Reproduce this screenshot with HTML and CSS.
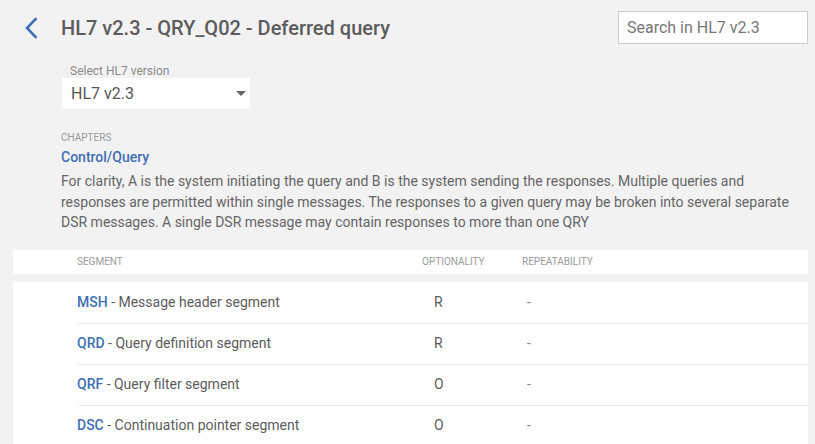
FILE: index.html
```html
<!DOCTYPE html>
<html>
<head>
<meta charset="utf-8">
<link rel="stylesheet" href="styles.css">
</head>
<body>
<div class="page">
  <header class="topbar">
    <a class="back" href="#" aria-label="Back">
      <svg width="14" height="22" viewBox="0 0 14 22"><path d="M11.5 2 L3 11 L11.5 20" fill="none" stroke="#3f6fb5" stroke-width="2.6" stroke-linecap="square"/></svg>
    </a>
    <h1 class="title">HL7 v2.3 - QRY_Q02 - Deferred query</h1>
    <div class="search">Search in HL7 v2.3</div>
  </header>

  <div class="version">
    <div class="version-label">Select HL7 version</div>
    <div class="select">
      <span>HL7 v2.3</span>
      <span class="caret"></span>
    </div>
  </div>

  <section class="chapter">
    <div class="chapter-label">CHAPTERS</div>
    <a class="chapter-link" href="#">Control/Query</a>
    <p class="chapter-desc">For clarity, A is the system initiating the query and B is the system sending the responses. Multiple queries and responses are permitted within single messages. The responses to a given query may be broken into several separate DSR messages. A single DSR message may contain responses to more than one QRY</p>
  </section>

  <div class="table">
    <div class="thead">
      <div class="c-seg">SEGMENT</div>
      <div class="c-opt">OPTIONALITY</div>
      <div class="c-rep">REPEATABILITY</div>
    </div>
    <div class="tbody">
      <div class="row">
        <div class="c-seg"><a href="#" class="code">MSH</a> - Message header segment</div>
        <div class="c-opt val-opt">R</div>
        <div class="c-rep val-rep">-</div>
      </div>
      <div class="row">
        <div class="c-seg"><a href="#" class="code">QRD</a> - Query definition segment</div>
        <div class="c-opt val-opt">R</div>
        <div class="c-rep val-rep">-</div>
      </div>
      <div class="row">
        <div class="c-seg"><a href="#" class="code">QRF</a> - Query filter segment</div>
        <div class="c-opt val-opt">O</div>
        <div class="c-rep val-rep">-</div>
      </div>
      <div class="row">
        <div class="c-seg"><a href="#" class="code">DSC</a> - Continuation pointer segment</div>
        <div class="c-opt val-opt">O</div>
        <div class="c-rep val-rep">-</div>
      </div>
    </div>
  </div>
</div>
</body>
</html>
```

FILE: styles.css
```css
* { box-sizing: border-box; }
html, body {
  margin: 0;
  padding: 0;
  background: #f2f2f2;
  font-family: Roboto, "Noto Sans", sans-serif;
  color: #5f5f5f;
  overflow: hidden;
}
a { text-decoration: none; }

.page {
  width: 815px;
  height: 444px;
}

.topbar {
  display: flex;
  align-items: center;
  padding: 11px 7px 0 24px;
  height: 44px;
}
.back {
  display: flex;
  width: 14px;
  height: 22px;
}
.title {
  margin: 0 0 0 23px;
  font-size: 20px;
  font-weight: 500;
  color: #5c5c5c;
  flex: 1;
  line-height: 24px;
}
.search {
  width: 190px;
  height: 33px;
  border: 1px solid #cccccc;
  background: #fff;
  color: #777;
  font-size: 16px;
  line-height: 31px;
  padding-left: 8px;
}

.version {
  padding: 20px 0 0 62px;
}
.version-label {
  font-size: 12px;
  line-height: 14px;
  color: #8a8a8a;
  padding-left: 8px;
}
.select {
  width: 188px;
  height: 31px;
  background: #fff;
  display: flex;
  align-items: center;
  justify-content: space-between;
  padding: 0 4px 0 9px;
  font-size: 16px;
  color: #555;
}
.caret {
  width: 0;
  height: 0;
  border-left: 5px solid transparent;
  border-right: 5px solid transparent;
  border-top: 5px solid #666;
}

.chapter {
  padding: 22px 20px 0 61px;
}
.chapter-label {
  font-size: 10px;
  line-height: 14px;
  color: #999;
}
.chapter-link {
  display: block;
  margin-top: 2px;
  font-size: 14px;
  font-weight: 500;
  color: #3f6fb5;
  line-height: 20px;
}
.chapter-desc {
  margin: 4px 0 0 0;
  font-size: 14px;
  line-height: 20.5px;
  color: #656565;
}

.table {
  margin: 17px 7px 0 13px;
}
.thead, .row {
  display: grid;
  grid-template-columns: 409px 100px 1fr;
  align-items: center;
}
.thead {
  height: 24px;
  background: #fff;
  font-size: 10px;
  color: #9a9a9a;
  margin-bottom: 8px;
}
.thead .c-seg, .row .c-seg { padding-left: 64px; }
.tbody {
  background: #fff;
}
.row {
  height: 41px;
  font-size: 14px;
  color: #5c5c5c;
  position: relative;
  padding-bottom: 1px;
}
.row + .row::before {
  content: "";
  position: absolute;
  left: 64px;
  right: 0;
  top: 0;
  height: 1px;
  background: #ececec;
}
.code {
  color: #3f6fb5;
  font-weight: 500;
}
.val-opt { padding-left: 12px; }
.val-rep { padding-left: 5px; color: #888; }
```
